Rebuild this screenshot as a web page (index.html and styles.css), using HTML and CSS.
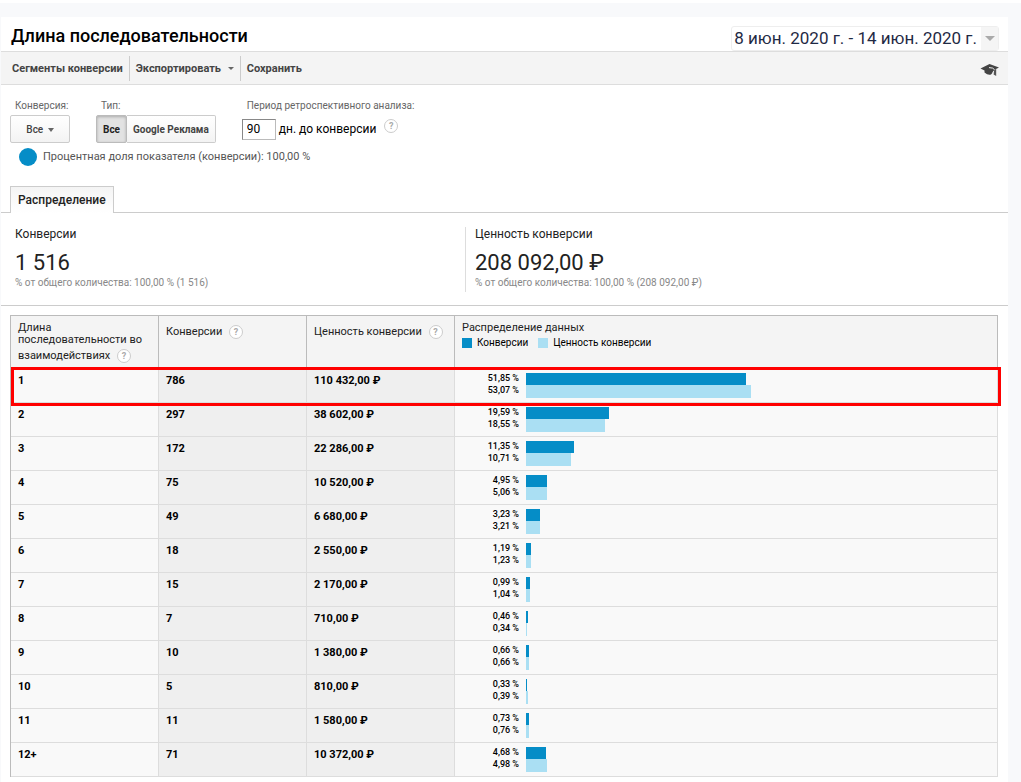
FILE: index.html
```
<!DOCTYPE html>
<html lang="ru">
<head>
  <meta charset="UTF-8" />
  <meta name="viewport" content="width=device-width, initial-scale=1.0"/>
  <title>Длина последовательности</title>
  <link rel="stylesheet" href="styles.css">
</head>
<body>

  <main class="report">
    <header class="report-header">
      <h1>Длина последовательности</h1>
      <button class="date-range" type="button">
        <span class="date-text">8 июн. 2020 г. - 14 июн. 2020 г.</span>
        <span class="date-arrow"><span class="caret"></span></span>
      </button>
    </header>

    <nav class="toolbar">
      <button type="button">Сегменты конверсии</button>
      <button type="button">Экспортировать <span class="caret"></span></button>
      <button type="button">Сохранить</button>
      <a class="education" href="#" aria-label="Обучение">
        <svg width="20" height="14" viewBox="0 0 20 14">
          <path d="M0.5 5.5 L9.5 1 L19 4.5 L16 6 L11 11.5 Q8 12.5 4.5 9.5 V7.5 Z" fill="#444"/>
          <path d="M9 4.6 Q13.5 4.4 14.8 7 L12.5 9.5" stroke="#f4f4f4" stroke-width="1" fill="none"/>
          <path d="M14.2 7 L16.2 6 V13 L13.6 11.5 Z" fill="#555"/>
        </svg>
      </a>
    </nav>

    <section class="filters">
      <div class="filter">
        <span class="filter-label">Конверсия:</span>
        <button class="btn btn-menu" type="button">Все <span class="caret"></span></button>
      </div>
      <div class="filter">
        <span class="filter-label">Тип:</span>
        <div class="btn-group">
          <button class="btn active" type="button">Все</button>
          <button class="btn" type="button">Google Реклама</button>
        </div>
      </div>
      <div class="filter">
        <label class="filter-label" for="days">Период ретроспективного анализа:</label>
        <div class="lookback">
          <input type="text" id="days" value="90">
          <span>дн. до конверсии</span>
          <button class="help" type="button">?</button>
        </div>
      </div>
    </section>

    <p class="share"><span class="share-dot"></span>Процентная доля показателя (конверсии): 100,00 %</p>

    <div class="tabs">
      <a class="tab" href="#">Распределение</a>
    </div>

    <section class="summary">
      <div class="metric">
        <h2>Конверсии</h2>
        <p class="metric-value">1 516</p>
        <p class="metric-note">% от общего количества: 100,00 % (1 516)</p>
      </div>
      <div class="metric">
        <h2>Ценность конверсии</h2>
        <p class="metric-value">208 092,00 ₽</p>
        <p class="metric-note">% от общего количества: 100,00 % (208 092,00 ₽)</p>
      </div>
    </section>

    <div class="table-wrap">
      <table>
        <thead>
          <tr>
            <th>Длина последовательности во взаимодействиях <button class="help" type="button">?</button></th>
            <th>Конверсии <button class="help" type="button">?</button></th>
            <th>Ценность конверсии <button class="help" type="button">?</button></th>
            <th>
              Распределение данных
              <div class="legend">
                <span class="swatch"></span>Конверсии
                <span class="swatch light"></span>Ценность конверсии
              </div>
            </th>
          </tr>
        </thead>
        <tbody>
          <tr class="highlight">
            <td>1</td><td>786</td><td>110 432,00 ₽</td>
            <td>
              <div class="bar-row"><span>51,85 %</span><div class="track"><div class="bar" style="width: 51.85%"></div></div></div>
              <div class="bar-row"><span>53,07 %</span><div class="track"><div class="bar light" style="width: 53.07%"></div></div></div>
            </td>
          </tr>
          <tr>
            <td>2</td><td>297</td><td>38 602,00 ₽</td>
            <td>
              <div class="bar-row"><span>19,59 %</span><div class="track"><div class="bar" style="width: 19.59%"></div></div></div>
              <div class="bar-row"><span>18,55 %</span><div class="track"><div class="bar light" style="width: 18.55%"></div></div></div>
            </td>
          </tr>
          <tr>
            <td>3</td><td>172</td><td>22 286,00 ₽</td>
            <td>
              <div class="bar-row"><span>11,35 %</span><div class="track"><div class="bar" style="width: 11.35%"></div></div></div>
              <div class="bar-row"><span>10,71 %</span><div class="track"><div class="bar light" style="width: 10.71%"></div></div></div>
            </td>
          </tr>
          <tr>
            <td>4</td><td>75</td><td>10 520,00 ₽</td>
            <td>
              <div class="bar-row"><span>4,95 %</span><div class="track"><div class="bar" style="width: 4.95%"></div></div></div>
              <div class="bar-row"><span>5,06 %</span><div class="track"><div class="bar light" style="width: 5.06%"></div></div></div>
            </td>
          </tr>
          <tr>
            <td>5</td><td>49</td><td>6 680,00 ₽</td>
            <td>
              <div class="bar-row"><span>3,23 %</span><div class="track"><div class="bar" style="width: 3.23%"></div></div></div>
              <div class="bar-row"><span>3,21 %</span><div class="track"><div class="bar light" style="width: 3.21%"></div></div></div>
            </td>
          </tr>
          <tr>
            <td>6</td><td>18</td><td>2 550,00 ₽</td>
            <td>
              <div class="bar-row"><span>1,19 %</span><div class="track"><div class="bar" style="width: 1.19%"></div></div></div>
              <div class="bar-row"><span>1,23 %</span><div class="track"><div class="bar light" style="width: 1.23%"></div></div></div>
            </td>
          </tr>
          <tr>
            <td>7</td><td>15</td><td>2 170,00 ₽</td>
            <td>
              <div class="bar-row"><span>0,99 %</span><div class="track"><div class="bar" style="width: 0.99%"></div></div></div>
              <div class="bar-row"><span>1,04 %</span><div class="track"><div class="bar light" style="width: 1.04%"></div></div></div>
            </td>
          </tr>
          <tr>
            <td>8</td><td>7</td><td>710,00 ₽</td>
            <td>
              <div class="bar-row"><span>0,46 %</span><div class="track"><div class="bar" style="width: 0.46%"></div></div></div>
              <div class="bar-row"><span>0,34 %</span><div class="track"><div class="bar light" style="width: 0.34%"></div></div></div>
            </td>
          </tr>
          <tr>
            <td>9</td><td>10</td><td>1 380,00 ₽</td>
            <td>
              <div class="bar-row"><span>0,66 %</span><div class="track"><div class="bar" style="width: 0.66%"></div></div></div>
              <div class="bar-row"><span>0,66 %</span><div class="track"><div class="bar light" style="width: 0.66%"></div></div></div>
            </td>
          </tr>
          <tr>
            <td>10</td><td>5</td><td>810,00 ₽</td>
            <td>
              <div class="bar-row"><span>0,33 %</span><div class="track"><div class="bar" style="width: 0.33%"></div></div></div>
              <div class="bar-row"><span>0,39 %</span><div class="track"><div class="bar light" style="width: 0.39%"></div></div></div>
            </td>
          </tr>
          <tr>
            <td>11</td><td>11</td><td>1 580,00 ₽</td>
            <td>
              <div class="bar-row"><span>0,73 %</span><div class="track"><div class="bar" style="width: 0.73%"></div></div></div>
              <div class="bar-row"><span>0,76 %</span><div class="track"><div class="bar light" style="width: 0.76%"></div></div></div>
            </td>
          </tr>
          <tr>
            <td>12+</td><td>71</td><td>10 372,00 ₽</td>
            <td>
              <div class="bar-row"><span>4,68 %</span><div class="track"><div class="bar" style="width: 4.68%"></div></div></div>
              <div class="bar-row"><span>4,98 %</span><div class="track"><div class="bar light" style="width: 4.98%"></div></div></div>
            </td>
          </tr>
        </tbody>
      </table>
    </div>
  </main>

</body>
</html>
```

FILE: styles.css
```
* {
  box-sizing: border-box;
}
body {
  margin: 0;
  padding: 14px 13px 0 1px;
  border-top: 3px solid #fff;
  background: #f8f9fb;
  color: #222;
  font-family: Roboto, Arial, sans-serif;
  font-size: 12px;
}
h1, h2, p {
  margin: 0;
}
button, input {
  font-family: inherit;
  color: inherit;
}
button {
  cursor: pointer;
}
.report {
  background: #fff;
  padding-bottom: 5px;
}
.caret {
  display: inline-block;
  border: 3px solid transparent;
  border-top-color: #666;
  border-bottom: 0;
  vertical-align: middle;
}

/* header */
.report-header {
  display: flex;
  justify-content: space-between;
  align-items: flex-end;
  height: 35px;
  padding: 0 9px 0 10px;
  border-bottom: 1px solid #ddd;
}
h1 {
  color: #000;
  font-size: 18px;
  font-weight: 500;
  line-height: 30px;
}
.date-range {
  display: flex;
  height: 25px;
  padding: 0;
  border: 1px solid #eee;
  border-radius: 3px;
  background: #fff;
  color: #1f2a44;
  font-size: 17px;
  line-height: 23px;
}
.date-text {
  padding: 0 4px 0 2px;
}
.date-arrow {
  display: flex;
  align-items: center;
  justify-content: center;
  width: 17px;
  background: #f5f5f5;
}
.date-arrow .caret {
  border-width: 5px 5px 0;
  border-top-color: #aaa;
}

/* toolbar */
.toolbar {
  display: flex;
  align-items: center;
  height: 33px;
  padding: 0 8px 0 5px;
  background: #f4f4f4;
  border-bottom: 1px solid #ddd;
}
.toolbar button {
  height: 25px;
  padding: 0 6px;
  border: 0;
  border-right: 1px solid #ccc;
  background: none;
  color: #444;
  font-size: 11px;
  font-weight: 700;
}
.toolbar button:nth-of-type(3) {
  border-right: 0;
}
.toolbar .caret {
  margin-left: 4px;
}
.education {
  display: flex;
  margin-left: auto;
  padding-top: 3px;
}

/* filters */
.filters {
  display: flex;
  gap: 26px;
  padding: 14px 9px 0;
}
.filter-label {
  display: block;
  padding-left: 5px;
  color: #666;
  font-size: 10px;
  line-height: 14px;
  margin-bottom: 2px;
}
.btn {
  height: 28px;
  padding: 0 6px;
  border: 1px solid #ccc;
  border-radius: 2px;
  background: linear-gradient(#fff, #f3f3f3);
  color: #444;
  font-size: 10px;
  font-weight: 700;
}
.btn-menu {
  width: 60px;
  font-weight: 500;
}
.btn-menu .caret {
  margin-left: 2px;
  border-width: 4px 3px 0;
}
.btn-group {
  display: flex;
}
.btn-group .btn + .btn {
  border-left: 0;
  border-radius: 0 2px 2px 0;
}
.btn.active {
  border-color: #bbb;
  background: #e2e2e2;
  box-shadow: inset 0 1px 3px #aaa;
  color: #222;
}
.lookback {
  display: flex;
  align-items: center;
  height: 28px;
  color: #000;
}
.lookback input {
  width: 34px;
  height: 21px;
  margin-right: 3px;
  padding: 0 4px;
  border: 1px solid #bbb;
  border-top-color: #888;
  border-left-color: #888;
  font-size: 12px;
}
.help {
  width: 14px;
  height: 14px;
  padding: 0;
  border: 1px solid #ccc;
  border-radius: 50%;
  background: #fff;
  color: #aaa;
  font-size: 9px;
  font-weight: 700;
  line-height: 12px;
}
.lookback .help {
  margin: 0 0 6px 8px;
}
.share {
  display: flex;
  align-items: center;
  gap: 6px;
  padding: 5px 18px 0;
  color: #555;
  font-size: 11px;
  line-height: 18px;
}
.share-dot {
  width: 18px;
  height: 18px;
  border-radius: 50%;
  background: #058dc7;
}

/* tabs */
.tabs {
  display: flex;
  margin-top: 20px;
  padding-left: 9px;
  border-bottom: 1px solid #ccc;
}
.tab {
  height: 27px;
  margin-bottom: -1px;
  padding: 0 7px;
  border: 1px solid #ccc;
  border-bottom: 0;
  background: linear-gradient(#f4f4f4, #fff);
  color: #222;
  font-weight: 500;
  line-height: 26px;
  text-decoration: none;
}

/* summary */
.summary {
  display: flex;
  padding: 14px 0 13px 14px;
  border-bottom: 1px solid #ccc;
}
.metric {
  width: 450px;
  height: 65px;
}
.metric + .metric {
  padding-left: 9px;
  border-left: 1px solid #ddd;
}
h2 {
  font-size: 12px;
  font-weight: 400;
  line-height: 14px;
}
.metric-value {
  padding-top: 7px;
  font-size: 22px;
  line-height: 29px;
}
.metric-note {
  color: #888;
  font-size: 10px;
  line-height: 12px;
}

/* table */
.table-wrap {
  padding: 9px 10px 0 9px;
}
table {
  width: 100%;
  border-left: 1px solid #bbb;
  border-spacing: 0;
  table-layout: fixed;
}
th {
  width: 148px;
  height: 54px;
  padding: 6px 7px 0;
  border: 1px solid #bbb;
  border-left: 0;
  background: #f4f4f4;
  font-size: 11px;
  font-weight: 400;
  line-height: 12px;
  text-align: left;
  vertical-align: top;
}
th:last-child {
  width: auto;
}
th .help {
  margin: 3px 0 0 4px;
  vertical-align: baseline;
}
.legend {
  display: flex;
  align-items: center;
  gap: 5px;
  margin-top: 3px;
  color: #000;
  font-size: 10px;
}
.swatch {
  width: 10px;
  height: 10px;
  background: #058dc7;
}
.swatch.light {
  margin-left: 5px;
}
td {
  height: 34px;
  padding: 4px 7px;
  border-right: 1px solid #ddd;
  border-bottom: 1px solid #ddd;
  background: #efefef;
  color: #000;
  font-size: 11px;
  font-weight: 700;
  line-height: 16px;
  vertical-align: top;
}
td:first-child, td:last-child {
  background: #f9f9f9;
}
td:last-child {
  padding: 4px 47px 0 7px;
}
.bar-row {
  display: flex;
  gap: 7px;
  height: 12px;
}
.bar-row span {
  width: 57px;
  font-size: 9px;
  font-weight: 500;
  line-height: 10px;
  text-align: right;
}
.track {
  flex: 1;
}
.bar {
  height: 12px;
  background: #058dc7;
}
.bar.light {
  height: 13px;
}
.swatch.light, .bar.light {
  background: #aadff3;
}

/* outlined row */
.highlight {
  position: relative;
}
.highlight td:last-child::after {
  content: "";
  position: absolute;
  inset: -2px -3px -3px 0;
  border: 3px solid #f00;
  pointer-events: none;
}
```
